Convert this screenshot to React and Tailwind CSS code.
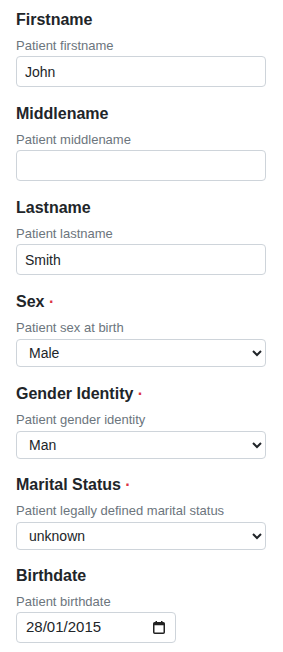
import React from "react";

const font = { fontFamily: '"Liberation Sans", Arial, sans-serif' };

function Heading({ children, required }) {
  return (
    <div className="h-[24px] text-[16px] leading-[24px] font-bold text-[#212529]">
      {children}
      {required && <span className="text-[#dc3545] font-bold"> ·</span>}
    </div>
  );
}

function Sub({ children }) {
  return (
    <div className="mt-[6px] h-[16px] text-[13px] leading-[16px] text-[#6c757d]">
      {children}
    </div>
  );
}

function TextField({ label, sub, value }) {
  return (
    <div className="mb-[15px]">
      <Heading>{label}</Heading>
      <Sub>{sub}</Sub>
      <input
        type="text"
        defaultValue={value}
        className="mt-[2px] block h-[31px] w-[250px] rounded-[4px] border border-[#ced4da] bg-white px-[8px] text-[14px] text-[#212529] outline-none"
        style={font}
      />
    </div>
  );
}

function SelectField({ label, sub, value, options, mb }) {
  return (
    <div className={mb}>
      <Heading required>{label}</Heading>
      <Sub>{sub}</Sub>
      <select
        defaultValue={value}
        className="mt-[3px] block h-[28px] w-[250px] rounded-[4px] border border-[#ced4da] bg-white pl-[8px] pr-[4px] text-[14px] text-[#212529] outline-none"
        style={font}
      >
        {options.map((o) => (
          <option key={o} value={o}>
            {o}
          </option>
        ))}
      </select>
    </div>
  );
}

export default function App() {
  return (
    <div className="min-h-[652px] bg-white pt-[8px] pl-[16px]" style={font}>
      <TextField label="Firstname" sub="Patient firstname" value="John" />
      <TextField label="Middlename" sub="Patient middlename" value="" />
      <TextField label="Lastname" sub="Patient lastname" value="Smith" />
      <SelectField
        label="Sex"
        sub="Patient sex at birth"
        value="Male"
        mb="mb-[15px]"
        options={["Male", "Female", "Other", "Unknown"]}
      />
      <SelectField
        label="Gender Identity"
        sub="Patient gender identity"
        value="Man"
        mb="mb-[14px]"
        options={["Man", "Woman", "Non-binary", "Other"]}
      />
      <SelectField
        label="Marital Status"
        sub="Patient legally defined marital status"
        value="unknown"
        mb="mb-[14px]"
        options={["unknown", "married", "single", "divorced", "widowed"]}
      />
      <div>
        <Heading>Birthdate</Heading>
        <Sub>Patient birthdate</Sub>
        <div className="mt-[2px] flex h-[31px] w-[160px] items-center justify-between rounded-[4px] border border-[#ced4da] bg-white pl-[9px] pr-[10px] text-[15px] text-[#212529]">
          <span>28/01/2015</span>
          <svg width="12" height="13" viewBox="0 0 12 13" className="block">
            <rect x="2.5" y="0" width="1.5" height="2.5" fill="#222" />
            <rect x="8" y="0" width="1.5" height="2.5" fill="#222" />
            <rect x="0.75" y="1.75" width="10.5" height="10.5" rx="1" fill="none" stroke="#222" strokeWidth="1.5" />
            <rect x="0.75" y="1.75" width="10.5" height="2.5" fill="#222" />
          </svg>
        </div>
      </div>
    </div>
  );
}
